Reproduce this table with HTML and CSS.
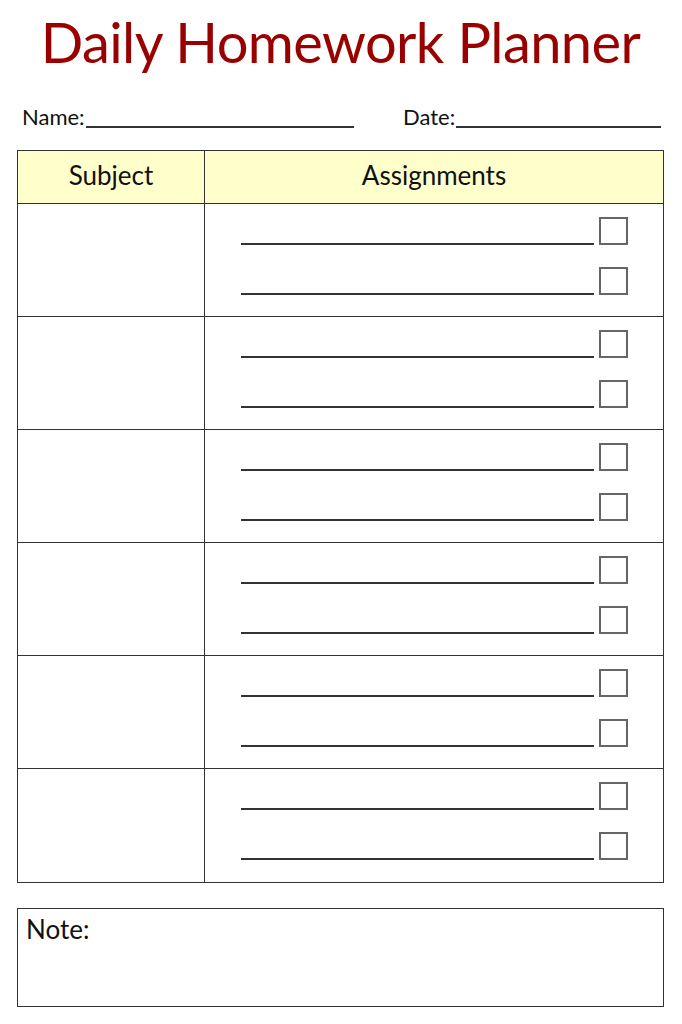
FILE: index.html
```html
<!DOCTYPE html>
<html lang="en">
<head>
<meta charset="utf-8">
<title>Daily Homework Planner</title>
<link rel="stylesheet" href="styles.css">
</head>
<body>
<main class="page">
  <h1 class="title">Daily Homework Planner</h1>
  <div class="meta">
    <div class="field field-name"><span class="label">Name:</span><span class="blank"></span></div>
    <div class="field field-date"><span class="label">Date:</span><span class="blank"></span></div>
  </div>
  <section class="sheet">
    <div class="head head-subject">Subject</div>
    <div class="head head-assign">Assignments</div>

    <div class="subject"></div>
    <div class="assign"><div class="item"><span class="line"></span><span class="box"></span></div><div class="item"><span class="line"></span><span class="box"></span></div></div>

    <div class="subject"></div>
    <div class="assign"><div class="item"><span class="line"></span><span class="box"></span></div><div class="item"><span class="line"></span><span class="box"></span></div></div>

    <div class="subject"></div>
    <div class="assign"><div class="item"><span class="line"></span><span class="box"></span></div><div class="item"><span class="line"></span><span class="box"></span></div></div>

    <div class="subject"></div>
    <div class="assign"><div class="item"><span class="line"></span><span class="box"></span></div><div class="item"><span class="line"></span><span class="box"></span></div></div>

    <div class="subject"></div>
    <div class="assign"><div class="item"><span class="line"></span><span class="box"></span></div><div class="item"><span class="line"></span><span class="box"></span></div></div>

    <div class="subject last"></div>
    <div class="assign last"><div class="item"><span class="line"></span><span class="box"></span></div><div class="item"><span class="line"></span><span class="box"></span></div></div>
  </section>
  <section class="note">
    <div class="note-label">Note:</div>
  </section>
</main>
</body>
</html>
```

FILE: styles.css
```css
* { box-sizing: border-box; }
html, body { margin: 0; padding: 0; background: #ffffff; }
body {
  font-family: "Lato", "Liberation Sans", sans-serif;
  color: #111;
  width: 682px;
  height: 1024px;
  overflow: hidden;
}
.page {
  padding: 0 18px 0 17px;
}
.title {
  margin: 0;
  padding-top: 8px;
  height: 96px;
  text-align: center;
  font-weight: 400;
  font-size: 56px;
  line-height: 68px;
  color: #990000;
  letter-spacing: -0.6px;
}
.meta {
  display: flex;
  height: 54px;
  padding-left: 5px;
  font-size: 22px;
}
.field { display: flex; align-items: flex-end; height: 32px; }
.field-name { width: 381px; }
.field-date { flex: 1; }
.label { line-height: 22px; }
.blank {
  display: block;
  border-bottom: 2px solid #333;
  height: 2px;
  margin-bottom: 0;
}
.field-name .blank { width: 268px; margin-left: 1px; }
.field-date .blank { width: 205px; margin-left: 1px; }

.sheet {
  display: grid;
  grid-template-columns: 187px 1fr;
  grid-template-rows: 53px repeat(6, 113px);
  border: 1px solid #333;
  width: 647px;
}
.head {
  background: #ffffcc;
  border-bottom: 1px solid #333;
  display: flex;
  align-items: center;
  justify-content: center;
  font-size: 26px;
  padding-bottom: 5px;
}
.head-subject, .subject { border-right: 1px solid #333; }
.subject, .assign { border-bottom: 1px solid #333; }
.subject.last, .assign.last { border-bottom: none; }
.assign {
  padding: 13px 0 0 36px;
  display: flex;
  flex-direction: column;
  gap: 22px;
}
.item { display: flex; align-items: flex-end; height: 28px; }
.line {
  display: block;
  width: 353px;
  height: 2px;
  border-bottom: 2px solid #333;
  margin-bottom: 0;
}
.box {
  display: block;
  width: 29px;
  height: 28px;
  margin-left: 5px;
  border: 2px solid #666;
}
.note {
  margin-top: 25px;
  width: 647px;
  height: 99px;
  border: 1px solid #333;
  padding: 5px 0 0 8px;
}
.note-label { font-size: 26px; line-height: 30px; }
```
